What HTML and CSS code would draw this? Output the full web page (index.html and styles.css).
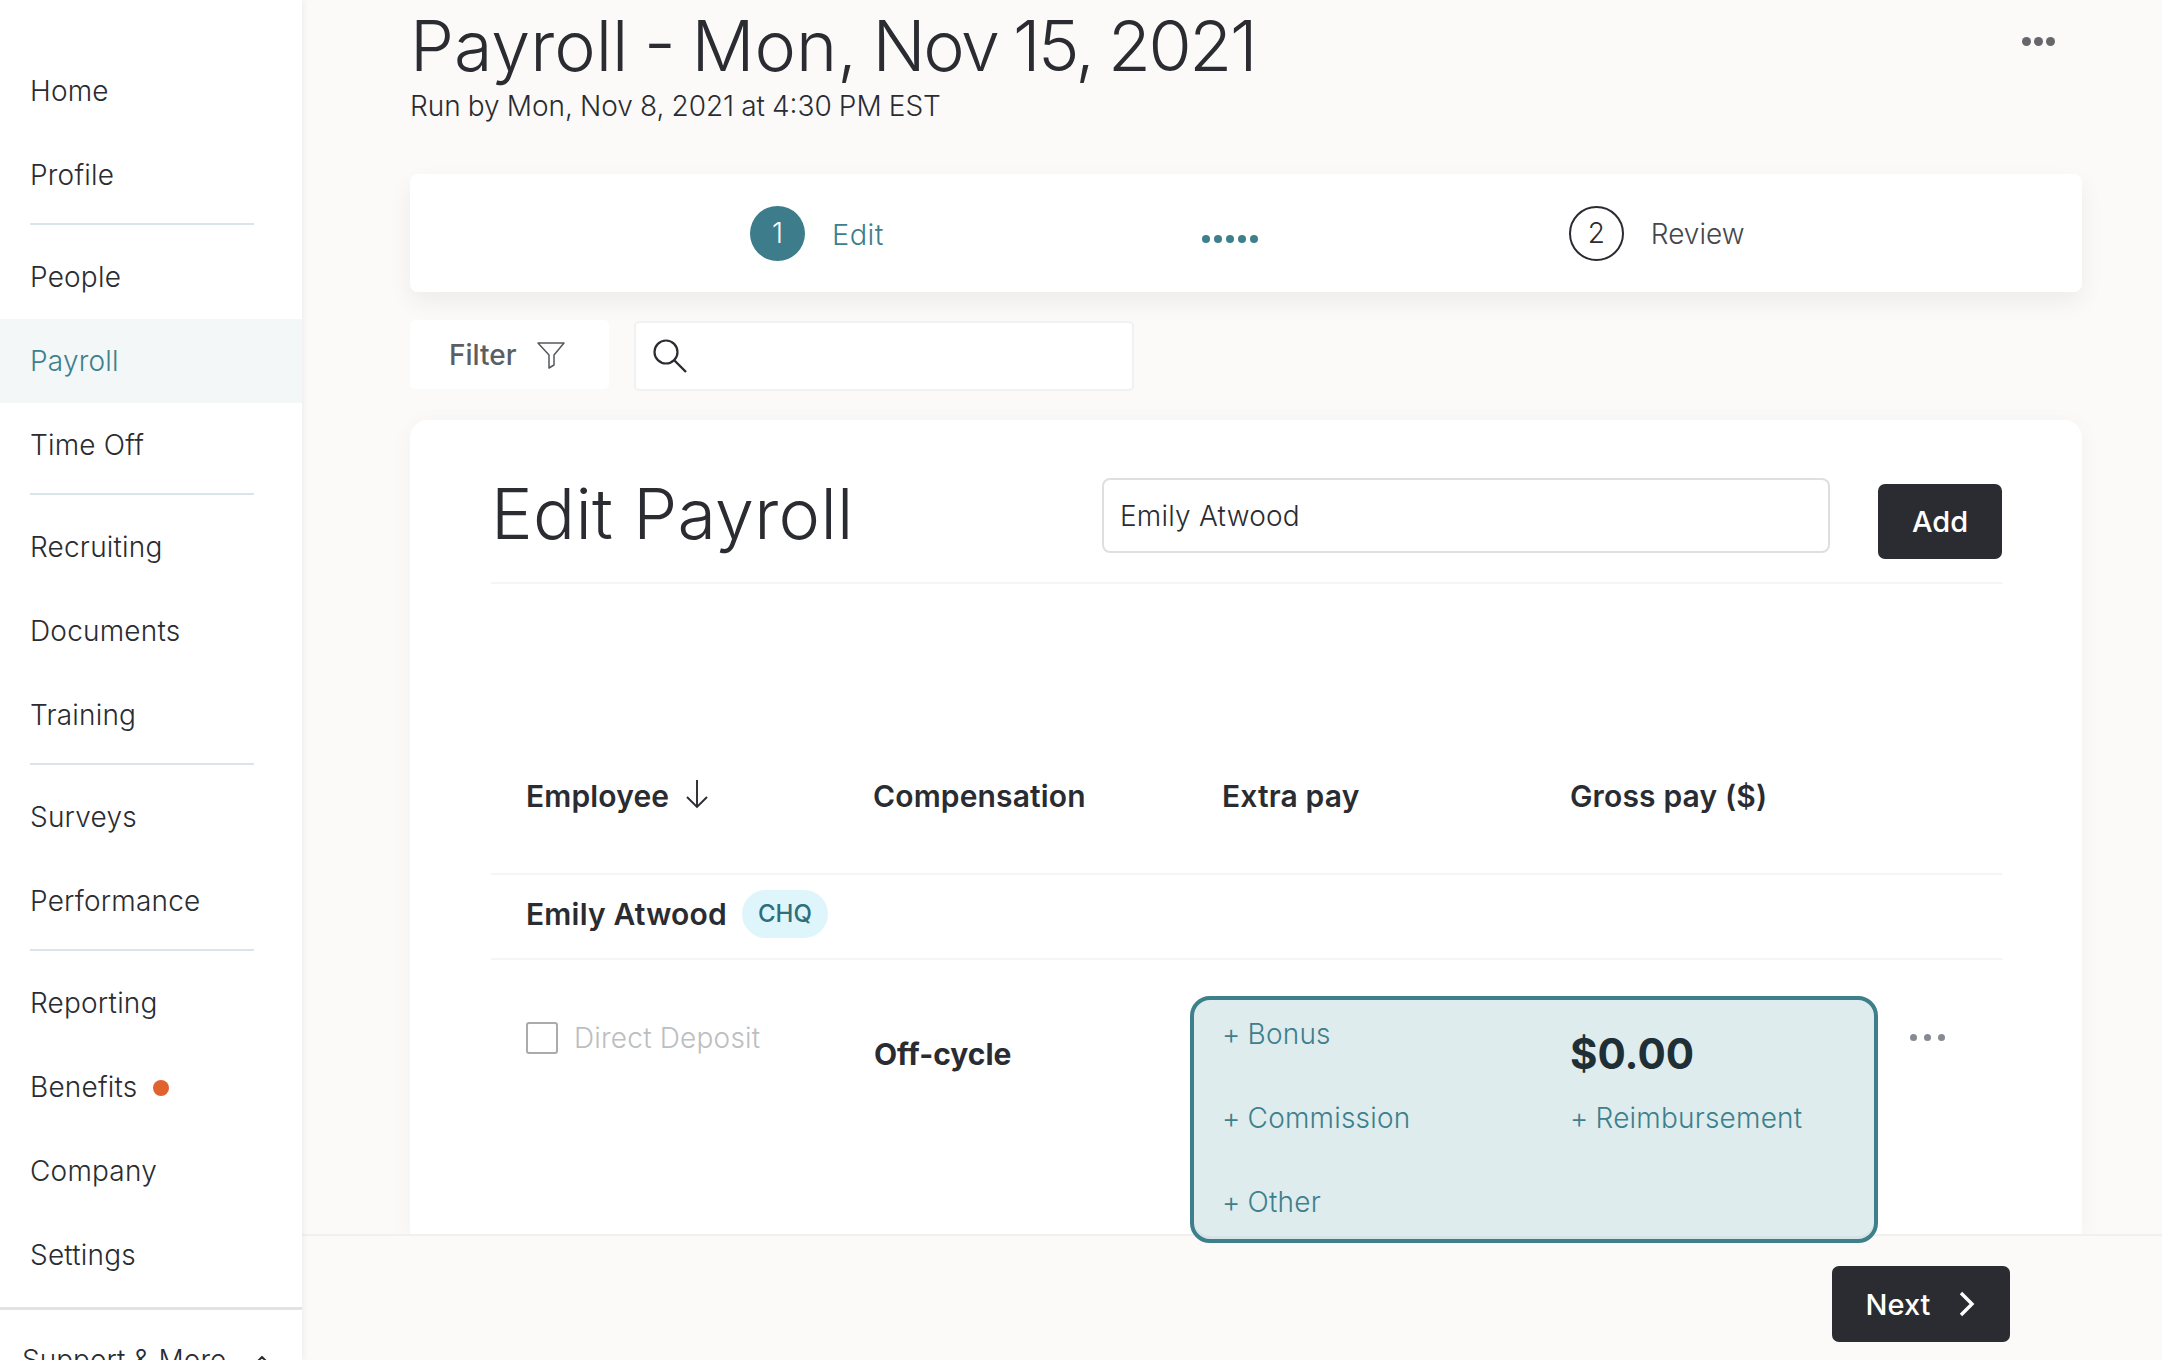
FILE: index.html
```html
<!DOCTYPE html>
<html lang="en">
<head>
<meta charset="utf-8">
<title>Payroll</title>
<link rel="stylesheet" href="styles.css">
</head>
<body>
<div class="app">
  <nav class="sidebar">
    <ul class="nav-group nav-first">
      <li class="nav-item">Home</li>
      <li class="nav-item">Profile</li>
    </ul>
    <ul class="nav-group">
      <li class="nav-item">People</li>
      <li class="nav-item active">Payroll</li>
      <li class="nav-item">Time Off</li>
    </ul>
    <ul class="nav-group">
      <li class="nav-item">Recruiting</li>
      <li class="nav-item">Documents</li>
      <li class="nav-item">Training</li>
    </ul>
    <ul class="nav-group">
      <li class="nav-item">Surveys</li>
      <li class="nav-item">Performance</li>
    </ul>
    <ul class="nav-group nav-last">
      <li class="nav-item">Reporting</li>
      <li class="nav-item">Benefits <span class="notify"></span></li>
      <li class="nav-item">Company</li>
      <li class="nav-item">Settings</li>
    </ul>
    <div class="support">Support &amp; More
      <svg class="support-caret" width="12" height="8" viewBox="0 0 12 8"><path d="M1 6l5-5 5 5" fill="none" stroke="#2a2c31" stroke-width="2"/></svg>
    </div>
  </nav>
  <div class="content">
    <main class="scroller">
      <header class="page-head">
        <div>
          <h1 class="page-title">Payroll - Mon, <span class="tight">Nov 15, 2021</span></h1>
          <p class="page-sub">Run by Mon, Nov 8, 2021 at 4:30 PM EST</p>
        </div>
        <div class="head-more"><i></i><i></i><i></i></div>
      </header>
      <section class="stepper">
        <div class="step step-one">
          <span class="step-num current">1</span>
          <span class="step-label current-label">Edit</span>
        </div>
        <div class="step-dots"><i></i><i></i><i></i><i></i><i></i></div>
        <div class="step step-two">
          <span class="step-num">2</span>
          <span class="step-label">Review</span>
        </div>
      </section>
      <div class="toolbar">
        <button class="filter">Filter
          <svg width="30" height="30" viewBox="0 0 30 30"><path d="M2 3h26L18 15v10l-5 3V15z" fill="none" stroke="#55585c" stroke-width="1.5" stroke-linejoin="round"/></svg>
        </button>
        <div class="search">
          <svg width="38" height="38" viewBox="0 0 38 38"><circle cx="15" cy="15" r="11.5" fill="none" stroke="#2a2c31" stroke-width="2.2"/><path d="M23.5 23.5L35 35" stroke="#2a2c31" stroke-width="2.4"/></svg>
        </div>
      </div>
      <section class="card">
        <div class="card-head">
          <h2 class="card-title">Edit Payroll</h2>
          <div class="name-input">Emily Atwood</div>
          <button class="btn btn-add">Add</button>
        </div>
        <div class="table-head">
          <div class="th">Employee
            <svg class="sort" width="24" height="30" viewBox="0 0 24 30"><path d="M12 1v27M2 18l10 10 10-10" fill="none" stroke="#2a2c31" stroke-width="1.9"/></svg>
          </div>
          <div class="th">Compensation</div>
          <div class="th">Extra pay</div>
          <div class="th">Gross pay ($)</div>
        </div>
        <div class="name-row">
          <span class="emp-name">Emily Atwood</span>
          <span class="badge">CHQ</span>
        </div>
        <div class="pay-row">
          <div class="deposit"><span class="check"></span><span class="deposit-label">Direct Deposit</span></div>
          <div class="offcycle">Off-cycle</div>
          <div class="pay-box">
            <span class="pay-link">+ Bonus</span>
            <span class="gross">$0.00</span>
            <span class="pay-link">+ Commission</span>
            <span class="pay-link">+ Reimbursement</span>
            <span class="pay-link">+ Other</span>
          </div>
          <div class="row-more"><i></i><i></i><i></i></div>
        </div>
      </section>
    </main>
    <footer class="footer">
      <button class="btn btn-next">Next
        <svg width="18" height="26" viewBox="0 0 18 26"><path d="M3 2l11 11L3 24" fill="none" stroke="#fff" stroke-width="3.4"/></svg>
      </button>
    </footer>
  </div>
</div>
</body>
</html>
```
FILE: styles.css
```css
* { box-sizing: border-box; }
html, body { margin: 0; padding: 0; height: 1360px; overflow: hidden; }
body { font-family: Inter, "Liberation Sans", sans-serif; color: #2a2c31; background: #fbfaf8; font-size: 28px; }
h1, h2, p, ul { margin: 0; padding: 0; list-style: none; font-weight: 400; }
button { font: inherit; border: 0; }

.app { display: flex; height: 1360px; }

.sidebar { width: 302px; flex: none; height: 1360px; background: #fff; box-shadow: 2px 0 6px rgba(0,0,0,.05); overflow: hidden; position: relative; z-index: 3; }
.nav-group { padding: 10px 0 8px; position: relative; }
.nav-group::after { content: ""; display: block; position: absolute; left: 30px; right: 48px; bottom: 0; height: 2px; background: #d9e6e9; }
.nav-first { padding-top: 49px; }
.nav-last { padding-bottom: 13px; }
.nav-last::after { left: 0; right: 0; height: 3px; background: #e2e3e3; }
.nav-item { height: 84px; padding-left: 30px; display: flex; align-items: center; font-size: 28px; font-weight: 300; letter-spacing: .2px; color: #2a2c31; }
.nav-item.active { background: #f3f7f8; color: #3d808c; }
.notify { width: 16px; height: 16px; border-radius: 50%; background: #e0622f; margin-left: 16px; margin-top: 2px; }
.support { padding: 33px 0 0 22px; font-size: 28px; font-weight: 300; white-space: nowrap; display: flex; align-items: center; gap: 30px; }

.content { flex: 1; min-width: 0; display: flex; flex-direction: column; }
.scroller { height: 1234px; padding: 0 80px 0 108px; }

.page-head { display: flex; justify-content: space-between; height: 174px; padding-top: 6px; }
.page-title { font-size: 70px; line-height: 80px; font-weight: 300; white-space: nowrap; word-spacing: -4px; }
.tight { letter-spacing: -2.4px; word-spacing: -2px; }
.page-sub { font-size: 28px; line-height: 40px; font-weight: 300; word-spacing: -.8px; }
.head-more { display: flex; gap: 3px; margin: 31px 27px 0 0; }
.head-more i { width: 9px; height: 9px; border-radius: 50%; background: #65676a; }

.stepper { height: 118px; background: #fff; border-radius: 8px; box-shadow: 0 10px 24px rgba(0,0,0,.06); display: flex; align-items: center; padding-left: 340px; }
.step { display: flex; align-items: center; gap: 27px; }
.step-num { width: 55px; height: 55px; border-radius: 50%; border: 2px solid #2a2c31; display: flex; align-items: center; justify-content: center; font-size: 28px; font-weight: 300; }
.step-num.current { background: #3d7c8a; border: 0; color: #fff; }
.step-label { font-size: 28px; font-weight: 300; color: #44474c; margin-top: 2px; }
.current-label { font-size: 29px; letter-spacing: .4px; color: #3d808c; }
.step-dots { display: flex; gap: 4px; margin: 12px 0 0 318px; }
.step-dots i { width: 8px; height: 8px; border-radius: 50%; background: #3d808c; }
.step-two { margin-left: 311px; }

.toolbar { display: flex; gap: 25px; margin-top: 28px; height: 71px; }
.filter { width: 199px; height: 69px; background: #fff; border-radius: 5px; display: flex; align-items: center; padding-left: 39px; gap: 19px; font-size: 28px; font-weight: 500; color: #5b5e62; }
.search { width: 500px; height: 70px; margin-top: 1px; background: #fff; border: 2px solid #f1f1f1; border-radius: 5px; display: flex; align-items: center; padding-left: 15px; }

.card { margin-top: 29px; height: 814px; background: #fff; border-radius: 18px 18px 0 0; box-shadow: 0 4px 24px rgba(0,0,0,.04); padding: 0 80px 0 81px; }
.card-head { height: 164px; border-bottom: 2px solid #f5f5f4; display: flex; }
.card-title { font-size: 70px; line-height: 80px; font-weight: 300; margin-top: 54px; white-space: nowrap; width: 611px; letter-spacing: .3px; }
.name-input { width: 728px; height: 75px; margin-top: 58px; border: 2px solid #dfdfdf; border-radius: 8px; padding-left: 16px; display: flex; align-items: center; font-weight: 300; font-size: 28px; letter-spacing: .2px; }
.btn { background: #2a2c31; color: #fff; border-radius: 7px; font-size: 29px; font-weight: 500; display: flex; align-items: center; justify-content: center; }
.btn-add { width: 124px; height: 75px; margin: 64px 0 0 48px; }

.table-head { height: 291px; padding-left: 35px; display: grid; grid-template-columns: 347px 349px 348px 1fr; align-items: end; border-bottom: 2px solid #f5f5f4; }
.th { font-size: 30px; font-weight: 600; line-height: 40px; letter-spacing: .15px; padding-bottom: 57px; display: flex; align-items: center; gap: 16px; }
.sort { margin-top: -4px; }
.name-row { height: 85px; padding: 0 0 6px 35px; display: flex; align-items: center; gap: 15px; border-bottom: 2px solid #f5f5f4; }
.emp-name { font-size: 30px; font-weight: 600; letter-spacing: .2px; }
.badge { height: 48px; width: 86px; border-radius: 24px; background: #def6fb; color: #2f6f7b; font-size: 24px; font-weight: 500; display: flex; align-items: center; justify-content: center; }

.pay-row { padding-left: 35px; display: grid; grid-template-columns: 348px 316px 688px 1fr; }
.deposit { display: flex; align-items: center; gap: 16px; height: 32px; margin-top: 62px; }
.check { width: 32px; height: 32px; border: 2px solid #a9abad; border-radius: 3px; }
.deposit-label { color: #bcbec0; font-size: 28px; font-weight: 300; letter-spacing: .2px; }
.offcycle { font-size: 30px; font-weight: 700; margin-top: 77px; line-height: 34px; }
.pay-box { position: relative; z-index: 5; margin-top: 36px; height: 247px; background: #dfecee; border: 4px solid #3d808c; border-radius: 20px; box-shadow: inset 0 -3px 0 #d6e4e7; padding-left: 28px; display: grid; grid-template-columns: 348px 1fr; grid-auto-rows: 84px; color: #3d808c; font-size: 28px; font-weight: 300; }
.pay-link { display: flex; align-items: center; white-space: nowrap; height: 68px; word-spacing: -1px; letter-spacing: .2px; }
.gross { color: #1f2f36; font-size: 42px; font-weight: 700; display: flex; align-items: center; height: 68px; margin-top: 19px; }
.row-more { display: flex; gap: 7px; margin: 74px 0 0 32px; height: 8px; }
.row-more i { width: 7px; height: 7px; border-radius: 50%; background: #868a92; }

.footer { position: relative; height: 126px; background: #fbfaf8; border-top: 2px solid #f0f0ee; z-index: 2; display: flex; justify-content: flex-end; padding: 30px 152px 0 0; }
.btn-next { width: 178px; height: 76px; gap: 28px; }
```
